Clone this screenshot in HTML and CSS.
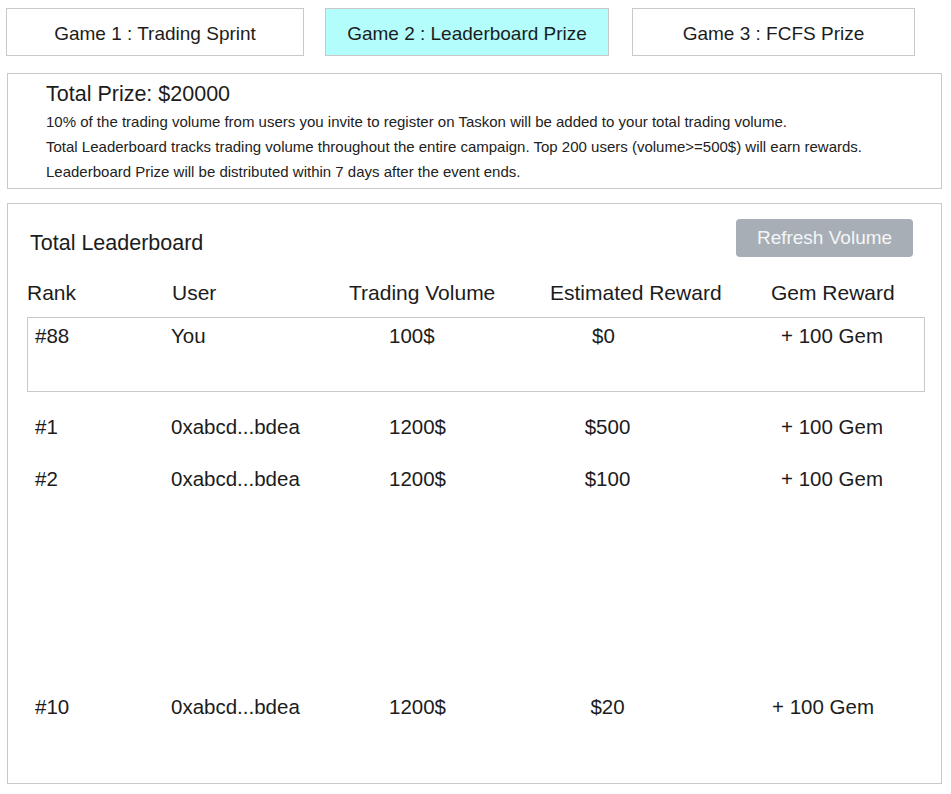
FILE: index.html
```html
<!DOCTYPE html>
<html lang="en">
<head>
<meta charset="utf-8">
<title>Leaderboard Prize</title>
<link rel="stylesheet" href="styles.css">
</head>
<body>
<div class="tabs">
  <div class="tab tab-1">Game 1 : Trading Sprint</div>
  <div class="tab tab-2 active">Game 2 : Leaderboard Prize</div>
  <div class="tab tab-3">Game 3 : FCFS Prize</div>
</div>

<section class="info">
  <h1 class="info-title">Total Prize: $20000</h1>
  <p class="info-line">10% of the trading volume from users you invite to register on Taskon will be added to your total trading volume.</p>
  <p class="info-line">Total Leaderboard tracks trading volume throughout the entire campaign. Top 200 users (volume&gt;=500$) will earn rewards.</p>
  <p class="info-line">Leaderboard Prize will be distributed within 7 days after the event ends.</p>
</section>

<section class="board">
  <div class="board-head">
    <h2 class="board-title">Total Leaderboard</h2>
    <button class="refresh">Refresh Volume</button>
  </div>
  <div class="cols">
    <span>Rank</span>
    <span>User</span>
    <span>Trading Volume</span>
    <span>Estimated Reward</span>
    <span>Gem Reward</span>
  </div>
  <div class="me">
    <div class="row row-me">
      <span>#88</span>
      <span>You</span>
      <span>100$</span>
      <span class="est est-me">$0</span>
      <span class="gem">+ 100 Gem</span>
    </div>
  </div>
  <div class="row row-1">
    <span>#1</span>
    <span>0xabcd...bdea</span>
    <span>1200$</span>
    <span class="est">$500</span>
    <span class="gem">+ 100 Gem</span>
  </div>
  <div class="row row-2">
    <span>#2</span>
    <span>0xabcd...bdea</span>
    <span>1200$</span>
    <span class="est">$100</span>
    <span class="gem">+ 100 Gem</span>
  </div>
  <div class="row row-10">
    <span>#10</span>
    <span>0xabcd...bdea</span>
    <span>1200$</span>
    <span class="est">$20</span>
    <span class="gem gem-left">+ 100 Gem</span>
  </div>
</section>
</body>
</html>
```

FILE: styles.css
```css
* { box-sizing: border-box; }

body {
  margin: 0;
  font-family: "Liberation Sans", Arial, Helvetica, sans-serif;
  color: #1c1c1c;
  background: #fff;
  width: 951px;
}

.tabs {
  display: flex;
  padding-top: 8px;
  padding-left: 6px;
}

.tab {
  height: 48px;
  border: 1px solid #c9c9c9;
  display: flex;
  align-items: center;
  justify-content: center;
  padding-top: 3px;
  font-size: 19px;
  background: #fff;
}

.tab-1 { width: 298px; }
.tab-2 { width: 284px; margin-left: 21px; }
.tab-3 { width: 283px; margin-left: 23px; }

.tab.active { background: #b3fdfd; }

.info {
  margin: 17px 0 0 7px;
  width: 935px;
  height: 116px;
  border: 1px solid #c9c9c9;
  padding: 7px 0 0 38px;
}

.info-title {
  margin: 0;
  font-size: 21.5px;
  font-weight: normal;
  line-height: 26px;
}

.info-line {
  margin: 0;
  font-size: 15px;
  line-height: 25px;
  color: #222;
}

.info-title + .info-line { margin-top: 2px; }

.board {
  margin: 14px 0 0 7px;
  width: 935px;
  height: 581px;
  border: 1px solid #c9c9c9;
  padding: 15px 0 0 0;
}

.board-head {
  display: flex;
  justify-content: space-between;
  align-items: flex-start;
  padding: 0 28px 0 22px;
}

.board-title {
  margin: 12px 0 0 0;
  font-size: 21.5px;
  font-weight: normal;
  line-height: 24px;
}

.refresh {
  width: 177px;
  height: 38px;
  border: none;
  border-radius: 4px;
  background: #a7aeb5;
  color: #f4f6f7;
  font-family: inherit;
  font-size: 19px;
  padding: 0;
}

.cols {
  margin-top: 24px;
  display: grid;
  grid-template-columns: 145px 177px 201px 221px 1fr;
  padding-left: 19px;
  font-size: 21px;
  line-height: 24px;
}

.me {
  margin: 12px 16px 0 19px;
  height: 75px;
  border: 1px solid #c9c9c9;
  padding-top: 6px;
}

.row {
  display: grid;
  grid-template-columns: 136px 218px 171px 95px 1fr;
  font-size: 20.5px;
  line-height: 24px;
  padding-left: 27px;
}

.row-me { padding-left: 7px; }

.row-1 { margin-top: 23px; }
.row-2 { margin-top: 28px; }
.row-10 { margin-top: 204px; }

.est { text-align: center; }
.est-me { padding-right: 8px; }

.gem { padding-left: 126px; }
.gem-left { padding-left: 117px; }
```
